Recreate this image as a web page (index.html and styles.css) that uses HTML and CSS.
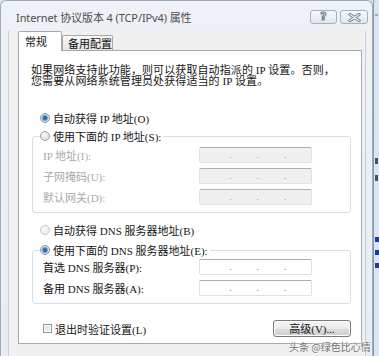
FILE: index.html
```html
<!DOCTYPE html>
<html lang="zh-CN">
<head>
<meta charset="utf-8">
<title>Internet 协议版本 4 (TCP/IPv4) 属性</title>
<link rel="stylesheet" href="styles.css">
</head>
<body>
<div class="screen">
  <div class="window">
    <div class="titlebar">
      <span class="title">Internet 协议版本 4 (TCP/IPv4) 属性</span>
      <div class="tbtns">
        <span class="tbtn help">?</span>
        <span class="tbtn close"><svg width="13" height="9" viewBox="0 0 13 9"><path d="M2 1.5 L11 7.5 M11 1.5 L2 7.5" stroke="#6f7c8e" stroke-width="3.2" stroke-linecap="round"/><path d="M2 1.5 L11 7.5 M11 1.5 L2 7.5" stroke="#eef2f6" stroke-width="1.4" stroke-linecap="round"/></svg></span>
      </div>
    </div>
    <div class="client">
      <div class="tabs">
        <span class="tab active">常规</span>
        <span class="tab">备用配置</span>
      </div>
      <div class="panel">
        <p class="intro">如果网络支持此功能，则可以获取自动指派的 IP 设置。否则，<br>您需要从网络系统管理员处获得适当的 IP 设置。</p>
        <div class="opt first"><span class="radio checked"></span><span>自动获得 IP 地址(O)</span></div>
        <fieldset class="group g1">
          <legend><span class="opt"><span class="radio"></span><span>使用下面的 IP 地址(S):</span></span></legend>
          <div class="field dis"><span class="lbl">IP 地址(I):</span><span class="ipbox off"><i>.</i><i>.</i><i>.</i></span></div>
          <div class="field dis"><span class="lbl">子网掩码(U):</span><span class="ipbox off"><i>.</i><i>.</i><i>.</i></span></div>
          <div class="field dis"><span class="lbl">默认网关(D):</span><span class="ipbox off"><i>.</i><i>.</i><i>.</i></span></div>
        </fieldset>
        <div class="opt third"><span class="radio light"></span><span>自动获得 DNS 服务器地址(B)</span></div>
        <fieldset class="group g2">
          <legend><span class="opt"><span class="radio checked"></span><span>使用下面的 DNS 服务器地址(E):</span></span></legend>
          <div class="field"><span class="lbl">首选 DNS 服务器(P):</span><span class="ipbox"><i>.</i><i>.</i><i>.</i></span></div>
          <div class="field"><span class="lbl">备用 DNS 服务器(A):</span><span class="ipbox"><i>.</i><i>.</i><i>.</i></span></div>
        </fieldset>
        <div class="footer">
          <span class="check"></span>
          <span class="cklbl">退出时验证设置(L)</span>
          <span class="btn">高级(V)...</span>
        </div>
      </div>
    </div>
    <span class="watermark">头条 @绿色比心情</span>
  </div>
  <div class="side">
    <span class="mk m1"></span>
    <span class="mk m2"></span>
    <span class="mk m3"></span>
    <span class="mk b1"></span>
    <span class="mk b2"></span>
    <span class="mk b3"></span>
  </div>
</div>
</body>
</html>
```
FILE: styles.css
```css
* { box-sizing: border-box; }
html, body { margin: 0; padding: 0; }
body {
  width: 379px;
  height: 356px;
  overflow: hidden;
  background: #dde7f1;
  font-family: "Liberation Serif", "Noto Sans CJK SC", serif;
  font-size: 11px;
  color: #151515;
}
.screen { display: flex; width: 379px; height: 356px; }

.window {
  position: relative;
  z-index: 1;
  flex: none;
  width: 373px;
  height: 356px;
  border: 1px solid #9eacbd;
  border-bottom: none;
  border-radius: 6px 6px 0 0;
  background: linear-gradient(#eef2f7, #e7edf4);
  display: flex;
  flex-direction: column;
}
.titlebar {
  flex: none;
  height: 30px;
  padding: 2px 4px 0 15px;
  display: flex;
  align-items: center;
}
.title {
  font-family: "Noto Sans", "Noto Sans CJK SC", sans-serif;
  font-size: 11px;
  color: #4d4d4d;
  letter-spacing: -0.1px;
}
.tbtns { margin-left: auto; display: flex; gap: 3px; }
.tbtn {
  height: 14px;
  border: 1px solid #a2b0c2;
  border-radius: 3px;
  background: linear-gradient(#f7f9fc, #dfe6ef);
  display: flex;
  align-items: center;
  justify-content: center;
}
.help {
  width: 27px;
  font-family: "DejaVu Sans", sans-serif;
  font-weight: bold;
  font-size: 11px;
  line-height: 12px;
  color: #eef2f6;
  -webkit-text-stroke: 1px #6f7c8e;
}
.close { width: 28px; }

.client {
  flex: 1;
  margin: 0 6px 0 7px;
  padding: 0 3px 0 9px;
  background: #f0f0f0;
  border: 1px solid #c6d0dc;
  border-top: none;
  border-bottom: none;
}
.tabs {
  position: relative;
  z-index: 1;
  display: flex;
  align-items: flex-end;
  height: 20px;
  margin-bottom: -1px;
  font-family: "Noto Sans CJK SC", sans-serif;
}
.tab {
  width: 51px;
  height: 15px;
  margin-bottom: 1px;
  padding-left: 5px;
  line-height: 14px;
  border: 1px solid #a5aab0;
  border-bottom: none;
  border-radius: 2px 2px 0 0;
  background: linear-gradient(#f8f8f8, #e4e4e4);
  color: #111;
}
.tab.active {
  width: 44px;
  height: 20px;
  margin-bottom: 0;
  padding-left: 6px;
  line-height: 19px;
  background: #fff;
}
.panel {
  width: 344px;
  height: 294px;
  border: 1px solid #a5aab0;
  background: #fff;
  display: flex;
  flex-direction: column;
}
.intro {
  margin: 14px 0 0 12px;
  line-height: 10.5px;
  letter-spacing: 0.1px;
}
.opt {
  display: flex;
  align-items: center;
  gap: 3px;
  height: 14px;
  white-space: nowrap;
}
.opt.first { margin: 25px 0 0 21px; }
.opt.third { margin: 10px 0 0 21px; }
.radio {
  flex: none;
  width: 10px;
  height: 10px;
  border-radius: 50%;
  border: 1px solid #9aa0a7;
  background: radial-gradient(circle at 40% 35%, #fafafa, #d8d8d8);
}
.radio.light { border-color: #c3c6ca; background: radial-gradient(circle at 40% 35%, #fbfbfb, #e6e6e6); }
.radio.checked {
  border-color: #8b97a6;
  background: radial-gradient(circle, #2d5f9a 0, #3f76b5 2px, #9fc3e6 3px, #e9eef3 4px, #dcdcdc 5px);
}
.group {
  margin: 4px 10px 0 13px;
  padding: 4px 0 7px 10px;
  border: 1px solid #d5dfe5;
  border-radius: 3px;
  min-width: 0;
}
.group.g2 { margin-top: 6px; padding-top: 2px; }
.group legend { padding: 0 2px 0 0; margin-left: -3px; }
.field {
  display: flex;
  align-items: center;
  height: 16px;
}
.field + .field { margin-top: 5px; }
.lbl { width: 156px; white-space: nowrap; }
.dis .lbl { color: #a9a9a9; }
.ipbox {
  width: 113px;
  height: 16px;
  display: flex;
  padding-left: 29px;
  border: 1px solid #dde2e8;
  border-top-color: #abadb3;
  border-radius: 2px;
  background: #fff;
  color: #8a8a8a;
  line-height: 13px;
}
.ipbox.off { background: #f0f0f0; color: #b0b0b0; }
.ipbox i { font-style: normal; width: 27.5px; }

.footer {
  display: flex;
  align-items: center;
  height: 17px;
  margin: 16px 10px 0 24px;
}
.check {
  width: 9px;
  height: 9px;
  border: 1px solid #8f969e;
  background: linear-gradient(135deg, #d9dde2, #f6f7f8);
  box-shadow: inset 0 0 0 1px #fff;
}
.cklbl { margin-left: 3px; }
.btn {
  margin-left: auto;
  width: 78px;
  height: 17px;
  border: 1px solid #7a7a7a;
  border-radius: 3px;
  background: linear-gradient(#f3f3f3 0, #ebebeb 50%, #dddddd 50%, #cfcfcf 100%);
  box-shadow: inset 0 0 0 1px #fbfbfb;
  display: flex;
  align-items: center;
  justify-content: center;
  line-height: 14px;
}
.watermark {
  position: absolute;
  z-index: 2;
  left: 288px;
  top: 339px;
  font-family: "Noto Sans CJK SC", sans-serif;
  font-size: 10px;
  line-height: 13px;
  color: #6f6f6f;
  text-shadow: 0 0 2px #fff, 0 0 2px #fff;
  white-space: nowrap;
}

.side {
  flex: 1;
  background: #dae5f1;
  border-left: 1px solid #8797ab;
  display: flex;
  flex-direction: column;
  align-items: flex-start;
}
.mk { display: block; width: 3px; margin-left: 1px; }
.m1 { margin-top: 14px; height: 2px; background: #9aa8b8; }
.m2 { margin-top: 142px; height: 6px; background: #47505c; }
.m3 { margin-top: 11px; height: 6px; background: #47505c; }
.b1 { margin-top: 56px; height: 5px; width: 4px; background: #23399a; }
.b2 { margin-top: 8px; height: 5px; width: 4px; background: #23399a; }
.b3 { margin-top: 8px; height: 5px; width: 4px; background: #23399a; }
```
